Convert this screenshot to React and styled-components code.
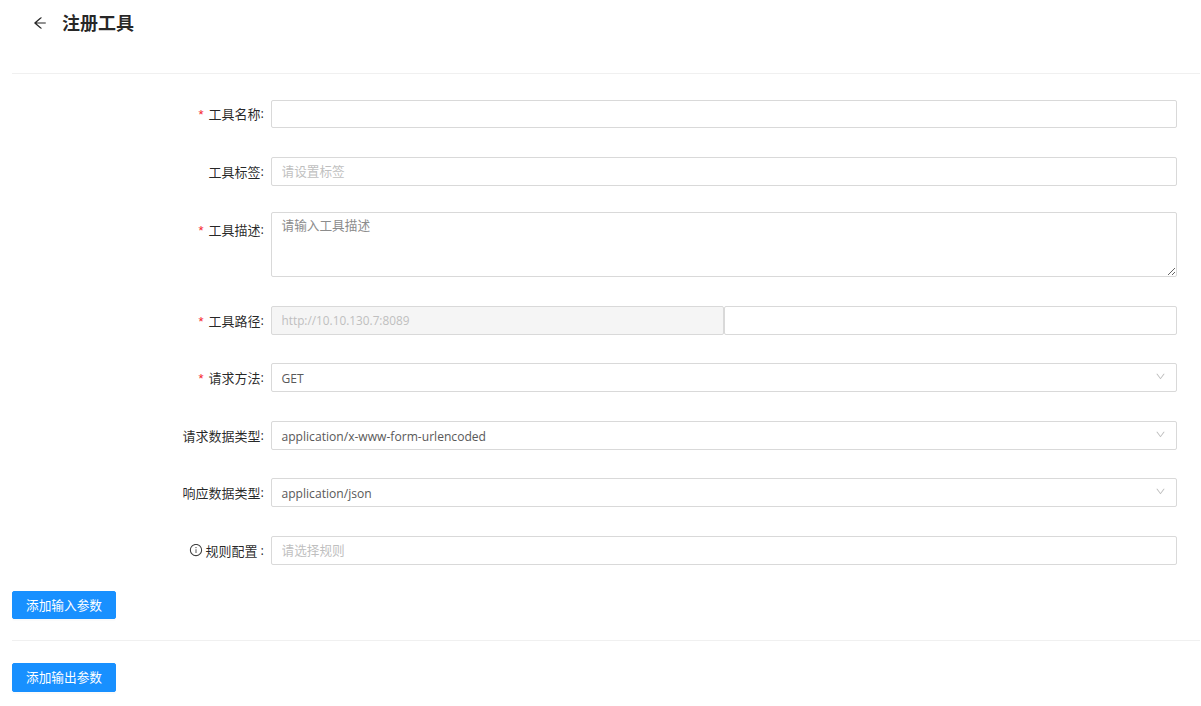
import React from "react";
import styled, { createGlobalStyle } from "styled-components";

const FONT = `"Open Sans", "Noto Sans CJK SC", sans-serif`;

const Global = createGlobalStyle`
  html, body { margin: 0; padding: 0; background: #fff; overflow: hidden; }
  * { box-sizing: border-box; }
  body { font-family: ${FONT}; font-size: 13px; }
`;

const Page = styled.div`
  width: 1200px;
  height: 706px;
  padding-left: 12px;
`;

const Header = styled.header`
  height: 74px;
  border-bottom: 1px solid #f0f0f0;
  display: flex;
  align-items: flex-start;
  gap: 14px;
  padding: 12px 0 0 20px;
`;

const BackIcon = styled.svg`
  width: 16px;
  height: 16px;
  margin-top: 3px;
  fill: rgba(0, 0, 0, 0.85);
`;

const Title = styled.h1`
  margin: 0;
  font-size: 18px;
  line-height: 23px;
  font-weight: 700;
  color: rgba(0, 0, 0, 0.85);
`;

const Form = styled.form`
  display: flex;
  flex-direction: column;
  padding: 26px 23px 0 0;
`;

const Row = styled.div`
  display: flex;
  align-items: flex-start;
  height: ${(p) => p.$h || 29}px;
  margin-bottom: ${(p) => p.$gap}px;
`;

const Label = styled.label`
  width: 259px;
  flex: none;
  height: 28px;
  margin-top: ${(p) => p.$dy || 0}px;
  padding-right: 7px;
  display: flex;
  align-items: center;
  justify-content: flex-end;
  font-size: 13px;
  color: rgba(0, 0, 0, 0.85);
  white-space: nowrap;
`;

const Star = styled.span`
  color: #f5222d;
  font-size: 13px;
  margin-right: 5px;
  font-family: "Liberation Sans", sans-serif;
  line-height: 1;
  position: relative;
  top: 1px;
`;

const Spaced = styled.span`
  margin-left: ${(p) => p.$ml || 0}px;
`;

const InfoIcon = styled.svg`
  width: 14px;
  height: 14px;
  margin-right: 3px;
  fill: rgba(0, 0, 0, 0.75);
`;

const fieldCss = `
  flex: 1;
  min-width: 0;
  height: 100%;
  border: 1px solid #d9d9d9;
  border-radius: 2px;
  padding: 0 9.5px;
  font-family: ${FONT};
  font-size: 12.1px;
  color: #595959;
  background: #fff;
  outline: none;
  &::placeholder { color: #bfbfbf; opacity: 1; font-size: 12.67px; }
`;

const TextInput = styled.input`
  ${fieldCss}
`;

const DisabledInput = styled.input`
  ${fieldCss}
  background: #f5f5f5;
  color: #bfbfbf;
  &:disabled { color: #bfbfbf; }
  &::placeholder { font-size: 11.8px; }
`;

const TextArea = styled.textarea`
  ${fieldCss}
  padding: 2px 9.5px;
  line-height: 20px;
  resize: vertical;
  display: block;
  &::placeholder { color: #8c8c8c; }
`;

const Group = styled.div`
  flex: 1;
  height: 100%;
  display: flex;
`;

const Select = styled.div`
  flex: 1;
  height: 100%;
  border: 1px solid #d9d9d9;
  border-radius: 2px;
  padding: 1px 10px 0 9.5px;
  display: flex;
  align-items: center;
  justify-content: space-between;
  font-size: 12.1px;
  color: #595959;
`;

const Chevron = styled.svg`
  width: 11px;
  height: 11px;
  fill: #bfbfbf;
  margin-bottom: 4px;
`;

const Button = styled.button`
  display: block;
  width: 104px;
  height: ${(p) => p.$h || 28}px;
  padding: 0 0 2px;
  border: 1px solid #1890ff;
  border-radius: 2px;
  background: #1890ff;
  color: #fff;
  font-family: ${FONT};
  font-size: 12.67px;
  box-shadow: 0 2px 0 rgba(0, 0, 0, 0.015);
`;

const Section = styled.section`
  padding: ${(p) => p.$pt}px 0 ${(p) => p.$pb}px;
  border-bottom: ${(p) => (p.$line ? "1px solid #f0f0f0" : "none")};
`;

const ArrowPath = "M872 474H286.9l350.2-304c5.6-4.9 2.2-14-5.2-14h-88.5c-3.9 0-7.6 1.4-10.5 3.9L155 487.8a31.96 31.96 0 0 0 0 48.3L535.1 866c1.5 1.3 3.3 2 5.2 2h91.5c7.4 0 10.8-9.2 5.2-14L286.9 550H872c4.4 0 8-3.6 8-8v-60c0-4.4-3.6-8-8-8z";
const DownPath = "M884 256h-75c-5.1 0-9.9 2.5-12.9 6.6L512 654.2 227.9 262.6c-3-4.1-7.8-6.6-12.9-6.6h-75c-6.5 0-10.3 7.4-6.5 12.7l352.6 486.1c12.8 17.6 39 17.6 51.7 0l352.6-486.1c3.9-5.3.1-12.7-6.4-12.7z";

const Down = () => (
  <Chevron viewBox="0 0 1024 1024"><path d={DownPath} /></Chevron>
);

const FieldLabel = ({ required, dy, children }) => (
  <Label $dy={dy}>
    {required && <Star>*</Star>}
    {children}
    <Spaced>:</Spaced>
  </Label>
);

export default function App() {
  return (
    <Page>
      <Global />
      <Header>
        <BackIcon viewBox="0 0 1024 1024"><path d={ArrowPath} /></BackIcon>
        <Title>注册工具</Title>
      </Header>
      <Form>
        <Row $h={28} $gap={29}>
          <FieldLabel required dy={-1}>工具名称</FieldLabel>
          <TextInput />
        </Row>
        <Row $gap={26}>
          <FieldLabel>工具标签</FieldLabel>
          <TextInput placeholder="请设置标签" />
        </Row>
        <Row $h={65} $gap={29}>
          <FieldLabel required dy={3}>工具描述</FieldLabel>
          <TextArea placeholder="请输入工具描述" />
        </Row>
        <Row $gap={28}>
          <FieldLabel required>工具路径</FieldLabel>
          <Group>
            <DisabledInput disabled placeholder="http://10.10.130.7:8089" />
            <TextInput />
          </Group>
        </Row>
        <Row $gap={29}>
          <FieldLabel required>请求方法</FieldLabel>
          <Select>GET<Down /></Select>
        </Row>
        <Row $gap={28}>
          <FieldLabel>请求数据类型</FieldLabel>
          <Select>application/x-www-form-urlencoded<Down /></Select>
        </Row>
        <Row $gap={29}>
          <FieldLabel>响应数据类型</FieldLabel>
          <Select>application/json<Down /></Select>
        </Row>
        <Row $gap={0}>
          <Label>
            <InfoIcon viewBox="0 0 1024 1024">
              <path d="M512 64C264.6 64 64 264.6 64 512s200.6 448 448 448 448-200.6 448-448S759.4 64 512 64zm0 820c-205.4 0-372-166.6-372-372s166.6-372 372-372 372 166.6 372 372-166.6 372-372 372z" />
              <path d="M464 336a48 48 0 1 0 96 0 48 48 0 1 0-96 0zm72 112h-48c-4.4 0-8 3.6-8 8v272c0 4.4 3.6 8 8 8h48c4.4 0 8-3.6 8-8V456c0-4.4-3.6-8-8-8z" />
            </InfoIcon>
            规则配置
            <Spaced $ml={3}>:</Spaced>
          </Label>
          <TextInput placeholder="请选择规则" />
        </Row>
      </Form>
      <Section $pt={26} $pb={21} $line>
        <Button type="button">添加输入参数</Button>
      </Section>
      <Section $pt={22} $pb={0}>
        <Button type="button" $h={29}>添加输出参数</Button>
      </Section>
    </Page>
  );
}
